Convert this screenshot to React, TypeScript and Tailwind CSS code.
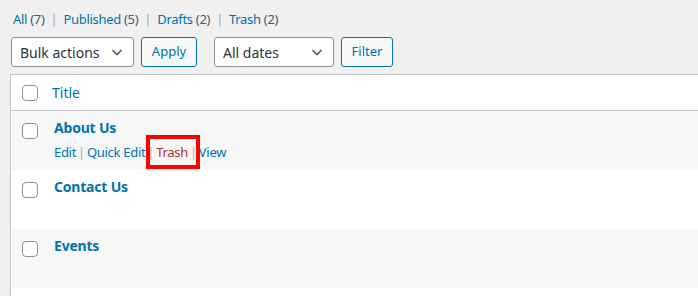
import React from "react";

const LINK = "text-[#0073aa]";

type Post = { title: string; actions?: boolean; striped: boolean };

const POSTS: Post[] = [
  { title: "About Us", actions: true, striped: true },
  { title: "Contact Us", striped: false },
  { title: "Events", striped: true },
];

function Checkbox() {
  return (
    <span className="block w-4 h-4 rounded-[4px] border border-[#8c8f94] bg-white" />
  );
}

function Select({ label, width }: { label: string; width: string }) {
  return (
    <div
      className={`${width} h-[30px] flex items-center justify-between pl-2 pr-2 bg-white border border-[#8c8f94] rounded-[3px] text-[14px] text-[#2c3338]`}
    >
      <span>{label}</span>
      <svg width="16" height="16" viewBox="0 0 16 16" fill="none">
        <path d="M3.5 6l4.5 4.5L12.5 6" stroke="#50575e" strokeWidth="1.6" />
      </svg>
    </div>
  );
}

function Button({ label, width }: { label: string; width: string }) {
  return (
    <div
      className={`${width} h-[30px] flex items-center justify-center bg-[#f6f7f7] border border-[#0073aa] rounded-[3px] text-[13px] text-[#0073aa]`}
    >
      {label}
    </div>
  );
}

function Sep() {
  return <span className="text-[#a7aaad] px-[2px]">|</span>;
}

export default function App() {
  return (
    <div
      className="w-[698px] h-[296px] overflow-hidden bg-[#f0f0f1]"
      style={{ fontFamily: '"Noto Sans", "Open Sans", sans-serif' }}
    >
      {/* status filters */}
      <div className="pl-[13px] pt-[9px] text-[13px] leading-[20px] tracking-[-0.3px] text-[#50575e]">
        <span className={LINK}>All</span> (7)
        <span className="text-[#a7aaad] px-[6px]">|</span>
        <span className={LINK}>Published</span> (5)
        <span className="text-[#a7aaad] px-[6px]">|</span>
        <span className={LINK}>Drafts</span> (2)
        <span className="text-[#a7aaad] px-[6px]">|</span>
        <span className={LINK}>Trash</span> (2)
      </div>

      {/* bulk actions */}
      <div className="flex items-center pl-[11px] mt-[8px]">
        <Select label="Bulk actions" width="w-[123px]" />
        <div className="w-[7px]" />
        <Button label="Apply" width="w-[56px]" />
        <div className="w-[17px]" />
        <Select label="All dates" width="w-[120px]" />
        <div className="w-[7px]" />
        <Button label="Filter" width="w-[52px]" />
      </div>

      {/* list table */}
      <div className="ml-[10px] mt-[7px] border border-r-0 border-[#c3c4c7] bg-white">
        <div className="h-[36px] flex items-center border-b border-[#c3c4c7]">
          <div className="pl-[11px] w-[41px]">
            <Checkbox />
          </div>
          <span className={`${LINK} text-[14px]`}>Title</span>
        </div>

        {POSTS.map((post) => (
          <div
            key={post.title}
            className={`h-[59px] flex ${post.striped ? "bg-[#f6f7f7]" : "bg-white"}`}
          >
            <div className="pl-[11px] pt-[12px] w-[43px]">
              <Checkbox />
            </div>
            <div className="pt-[7px]">
              <div className={`${LINK} text-[14px] font-bold leading-[20px] tracking-[-0.2px]`}>
                {post.title}
              </div>
              {post.actions && (
                <div className="mt-[4px] text-[13px] leading-[20px] tracking-[-0.3px] text-[#0073aa]">
                  <span>Edit</span>
                  <Sep />
                  <span>Quick Edit</span>
                  <Sep />
                  <span className="relative text-[#b32d2e]">
                    Trash
                    <span className="absolute -left-[10px] -top-[8px] w-[54px] h-[34px] border-4 border-[#ff0000]" />
                  </span>
                  <Sep />
                  <span>View</span>
                </div>
              )}
            </div>
          </div>
        ))}
        <div className="h-[20px] bg-white" />
      </div>
    </div>
  );
}
